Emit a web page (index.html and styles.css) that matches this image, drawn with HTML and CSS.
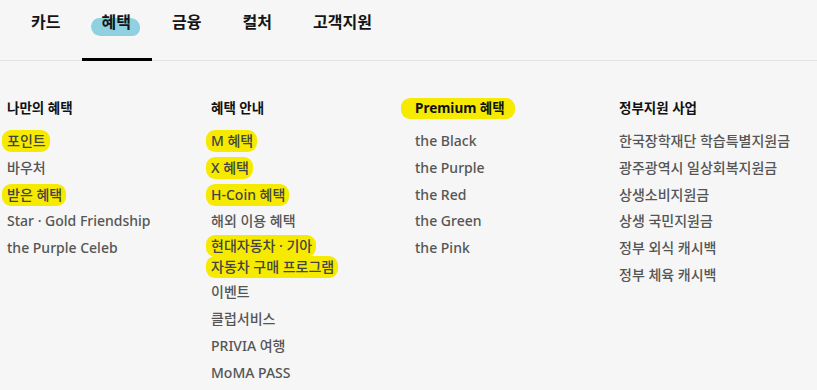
FILE: index.html
```html
<!DOCTYPE html>
<html lang="ko">
<head>
  <meta charset="UTF-8">
  <title>혜택</title>
  <meta name="viewport" content="width=device-width, initial-scale=1.0">
  <link rel="stylesheet" href="styles.css">
</head>
<body>
<div class="menu-wrapper">

  <!-- 상단 메뉴 -->
  <nav class="gnb">
    <a class="gnb-item">카드</a>
    <a class="gnb-item active"><span class="blob">혜택</span></a>
    <a class="gnb-item">금융</a>
    <a class="gnb-item">컬처</a>
    <a class="gnb-item">고객지원</a>
  </nav>

  <!-- 하위 메뉴 -->
  <section class="sub-menu">
    <div class="col">
      <h3>나만의 혜택</h3>
      <ul>
        <li><mark>포인트</mark></li>
        <li>바우처</li>
        <li><mark>받은 혜택</mark></li>
        <li>Star · Gold Friendship</li>
        <li>the Purple Celeb</li>
      </ul>
    </div>

    <div class="col">
      <h3>혜택 안내</h3>
      <ul>
        <li><mark>M 혜택</mark></li>
        <li><mark>X 혜택</mark></li>
        <li><mark>H-Coin 혜택</mark></li>
        <li>해외 이용 혜택</li>
        <li class="two-line"><mark>현대자동차 · 기아</mark><br><mark>자동차 구매 프로그램</mark></li>
        <li>이벤트</li>
        <li>클럽서비스</li>
        <li>PRIVIA 여행</li>
        <li>MoMA PASS</li>
      </ul>
    </div>

    <div class="col">
      <h3><mark class="head-mark">Premium 혜택</mark></h3>
      <ul>
        <li>the Black</li>
        <li>the Purple</li>
        <li>the Red</li>
        <li>the Green</li>
        <li>the Pink</li>
      </ul>
    </div>

    <div class="col">
      <h3>정부지원 사업</h3>
      <ul>
        <li>한국장학재단 학습특별지원금</li>
        <li>광주광역시 일상회복지원금</li>
        <li>상생소비지원금</li>
        <li>상생 국민지원금</li>
        <li>정부 외식 캐시백</li>
        <li>정부 체육 캐시백</li>
      </ul>
    </div>
  </section>
</div>
</body>
</html>
```

FILE: styles.css
```css
* {
  box-sizing: border-box;
}

html, body {
  margin: 0;
  padding: 0;
  background: #f6f6f6;
}

body {
  font-family: "Noto Sans", "Noto Sans CJK KR", sans-serif;
  color: #111;
}

.menu-wrapper {
  width: 817px;
  height: 390px;
  overflow: hidden;
}

.gnb {
  display: flex;
  padding-left: 11px;
  border-bottom: 1px solid #e2e2e2;
  height: 61px;
}

.gnb-item {
  display: block;
  padding: 10px 0 0 20px;
  width: 70.5px;
  font-size: 16px;
  font-weight: 700;
  line-height: 24px;
  white-space: nowrap;
  color: #151515;
}

.gnb-item:nth-child(5) {
  width: auto;
}

.gnb-item.active {
  border-bottom: 3px solid #000;
  height: 61px;
}

.blob {
  position: relative;
  z-index: 0;
}

.blob::before {
  content: "";
  position: absolute;
  z-index: -1;
  left: -11px;
  top: 7px;
  width: 49px;
  height: 18px;
  background: #8fd1e1;
  border-radius: 9px 10px 8px 10px;
}

.sub-menu {
  display: grid;
  grid-template-columns: repeat(4, 204px);
  padding: 37px 0 0 7px;
}

.col h3 {
  margin: 0 0 10px;
  font-size: 13.5px;
  font-weight: 700;
  line-height: 20px;
  color: #111;
}

.col ul {
  list-style: none;
  margin: 0;
  padding: 0;
}

.col li {
  font-size: 14px;
  font-weight: 500;
  line-height: 26.8px;
  color: #555;
  white-space: nowrap;
}

.col li.two-line {
  line-height: 21px;
  padding: 0 0 2px;
}

mark {
  background: #f6ea00;
  color: #444;
  padding: 1px 4px 2px 5px;
  margin-left: -5px;
  border-radius: 9px;
}

.head-mark {
  color: #111;
  padding: 1px 10px 2px 14px;
  margin-left: -14px;
}
```
